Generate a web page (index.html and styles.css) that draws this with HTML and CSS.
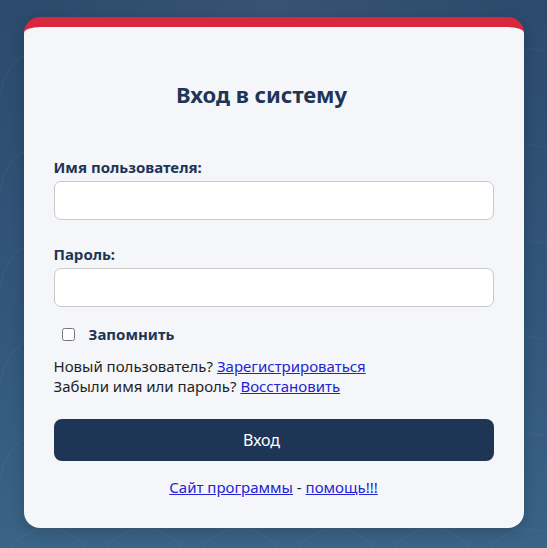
FILE: index.html
```html
<!DOCTYPE html>
<html lang="ru">
<head>
<meta charset="utf-8">
<title>Вход в систему</title>
<link rel="stylesheet" href="styles.css">
</head>
<body>
<div class="page">
  <form class="card">
    <h1 class="title">Вход в систему</h1>
    <div class="field">
      <label class="label" for="u">Имя пользователя:</label>
      <input class="input" id="u" type="text">
    </div>
    <div class="field">
      <label class="label" for="p">Пароль:</label>
      <input class="input" id="p" type="password">
    </div>
    <label class="remember"><input type="checkbox" class="check"><span>Запомнить</span></label>
    <div class="links">
      <div>Новый пользователь? <a href="#">Зарегистрироваться</a></div>
      <div>Забыли имя или пароль? <a href="#">Восстановить</a></div>
    </div>
    <button type="button" class="btn">Вход</button>
    <div class="footer"><a href="#">Сайт программы</a> - <a href="#">помощь!!!</a></div>
  </form>
</div>
</body>
</html>
```
FILE: styles.css
```css
html, body { margin: 0; padding: 0; height: 100%; }
body {
  font-family: "Noto Sans", "Open Sans", sans-serif;
  background:
    radial-gradient(circle at 50% 100%, transparent 46px, rgba(255,255,255,0.045) 47px, transparent 48px) 0 0 / 96px 96px,
    radial-gradient(circle at 50% 0%, rgba(255,255,255,0.05), transparent 40%),
    linear-gradient(180deg, #2c4a6c 0%, #32577c 60%, #3a6386 100%);
  color: #1f1f1f;
}
.page {
  display: flex;
  justify-content: center;
  padding-top: 17px;
}
.card {
  width: 440px;
  background: #f4f6f9;
  border-top: 10px solid #d7283f;
  border-radius: 16px;
  padding: 0 30px 31px;
  box-shadow: 0 4px 14px rgba(0,0,0,0.18);
}
.title {
  margin: 0;
  padding: 52px 24px 0 0;
  text-align: center;
  font-size: 22px;
  line-height: 30px;
  font-weight: 700;
  color: #1e3556;
}
.field { display: flex; flex-direction: column; }
.field:first-of-type { margin-top: 48px; }
.field + .field { margin-top: 24px; }
.label {
  font-size: 15px;
  font-weight: 700;
  color: #1e3556;
  line-height: 20px;
  margin-bottom: 4px;
}
.input {
  box-sizing: border-box;
  height: 39px;
  border: 1px solid #c8c8c8;
  border-radius: 7px;
  background: #fff;
  margin: 0;
}
.remember {
  display: flex;
  align-items: center;
  margin-top: 17px;
  font-size: 15px;
  font-weight: 700;
  color: #1e3556;
  line-height: 20px;
}
.check {
  width: 13px;
  height: 13px;
  margin: 0 14px 0 8px;
}
.links {
  margin-top: 12px;
  font-size: 15px;
  line-height: 20px;
}
a { color: #2323d6; }
.btn {
  display: block;
  width: 100%;
  margin-top: 23px;
  height: 42px;
  border: none;
  border-radius: 8px;
  background: #1e3556;
  color: #fff;
  font-family: inherit;
  font-size: 16px;
  padding: 0 24px 0 0;
}
.footer {
  margin-top: 16px;
  text-align: center;
  font-size: 15px;
  line-height: 20px;
}
```
